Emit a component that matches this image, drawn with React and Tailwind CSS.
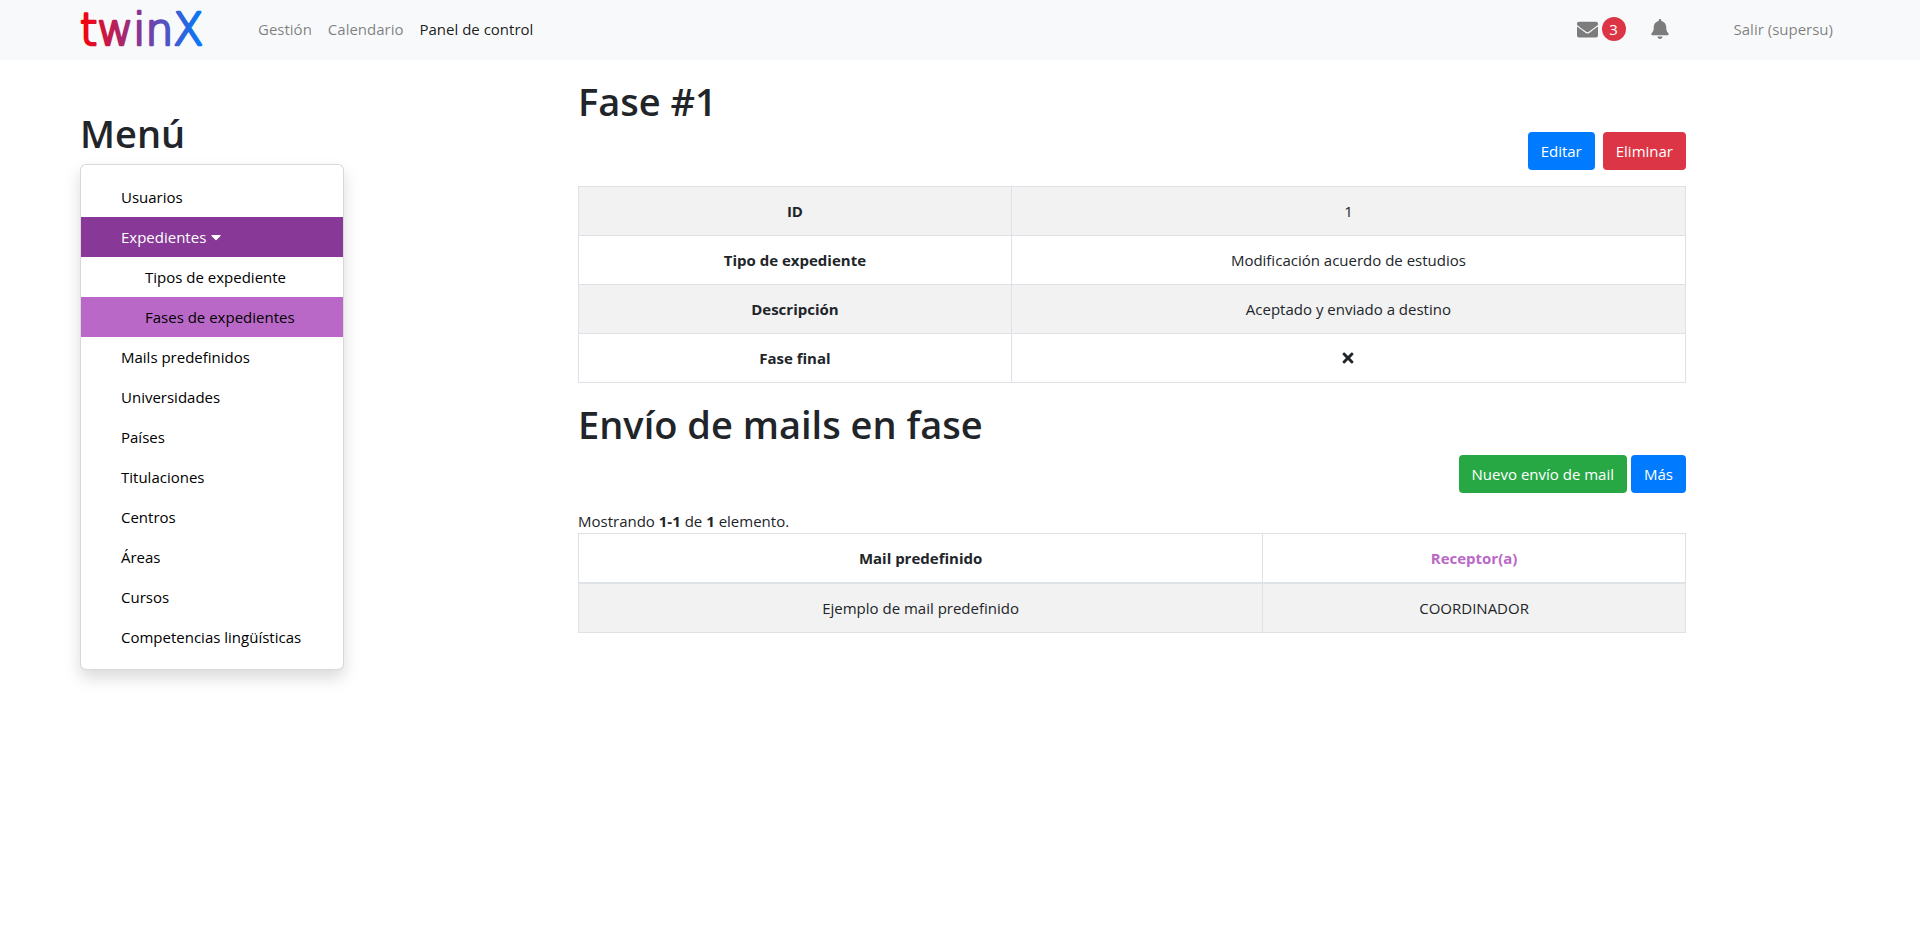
import React from "react";
import { FaEnvelope, FaBell, FaTimes, FaCaretDown } from "react-icons/fa";

const menu = [
  { label: "Usuarios" },
  { label: "Expedientes", open: true },
  { label: "Tipos de expediente", sub: true },
  { label: "Fases de expedientes", sub: true, active: true },
  { label: "Mails predefinidos" },
  { label: "Universidades" },
  { label: "Países" },
  { label: "Titulaciones" },
  { label: "Centros" },
  { label: "Áreas" },
  { label: "Cursos" },
  { label: "Competencias lingüísticas" },
];

const details = [
  ["ID", "1"],
  ["Tipo de expediente", "Modificación acuerdo de estudios"],
  ["Descripción", "Aceptado y enviado a destino"],
  ["Fase final", <FaTimes key="no" role="img" aria-label="No" className="mx-auto size-4" />],
];

function Logo() {
  return (
    <a href="#inicio" aria-label="twinX" className="block shrink-0">
      <svg width="128" height="58" viewBox="0 0 128 58" className="overflow-visible">
        <defs>
          <linearGradient id="brand" gradientUnits="userSpaceOnUse" x1="0" y1="0" x2="124" y2="0">
            <stop offset="0" stopColor="#fb0007" />
            <stop offset="0.5" stopColor="#83399c" />
            <stop offset="1" stopColor="#007bff" />
          </linearGradient>
        </defs>
        <text
          x="0"
          y="45"
          fill="url(#brand)"
          stroke="url(#brand)"
          strokeWidth="2.6"
          strokeLinejoin="round"
          className="font-['DejaVu_Sans',sans-serif] text-[44px] font-extralight"
        >
          twinX
        </text>
      </svg>
    </a>
  );
}

function Heading({ children }) {
  return <h1 className="text-[38px] leading-12 font-semibold">{children}</h1>;
}

function Button({ color, children }) {
  return (
    <button type="button" className={`h-[38px] rounded-sm px-[13px] text-white ${color}`}>
      {children}
    </button>
  );
}

function menuStyle(item) {
  if (item.open) return "bg-[#883997] pl-10 text-white";
  if (item.active) return "bg-[#ba68c8] pl-16 text-black";
  return item.sub ? "pl-16 text-black" : "pl-10 text-black";
}

const cell = "border border-[#dee2e6] p-3";

export default function App() {
  return (
    <div className="min-h-screen bg-white font-['Open_Sans','Noto_Sans',sans-serif] text-[15px] leading-6 text-[#212529]">
      <header className="flex h-15 items-center bg-[#f8f9fa] px-20 pb-0.5 text-black/50">
        <Logo />
        <nav className="ml-[50px] flex gap-4">
          <a href="#gestion">Gestión</a>
          <a href="#calendario">Calendario</a>
          <a href="#panel" aria-current="page" className="text-black/90">Panel de control</a>
        </nav>
        <div className="ml-auto flex items-center pr-[7px]">
          <a href="#mensajes" aria-label="Mensajes: 3" className="flex items-center gap-1">
            <FaEnvelope className="size-[21px]" />
            <span className="flex size-6 items-center justify-center rounded-full bg-[#dc3545] text-white">3</span>
          </a>
          <a href="#avisos" aria-label="Avisos" className="ml-6">
            <FaBell className="size-5" />
          </a>
          <a href="#salir" className="ml-16">Salir (supersu)</a>
        </div>
      </header>

      <div className="grid grid-cols-[264fr_234fr_1108fr_154fr] items-start px-20">
        <aside className="pt-[49px]">
          <Heading>Menú</Heading>
          <nav className="mt-[7px] rounded-md border border-black/15 bg-white py-3 shadow-[0_8px_16px_rgba(0,0,0,0.15)]">
            {menu.map((item) => (
              <a
                key={item.label}
                href={`#${item.label}`}
                className={`flex h-10 items-center whitespace-nowrap ${menuStyle(item)}`}
              >
                {item.label}
                {item.open && <FaCaretDown className="ml-0.5 size-4" />}
              </a>
            ))}
          </nav>
        </aside>

        <main className="col-start-3 pt-[17px]">
          <Heading>Fase #1</Heading>
          <div className="mt-[7px] flex justify-end gap-2">
            <Button color="bg-[#007bff]">Editar</Button>
            <Button color="bg-[#dc3545]">Eliminar</Button>
          </div>
          <table className="mt-4 w-full table-fixed border-collapse text-center">
            <colgroup>
              <col className="w-[39.1%]" />
              <col />
            </colgroup>
            <tbody>
              {details.map(([name, value]) => (
                <tr key={name} className="odd:bg-[#f2f2f2]">
                  <th scope="row" className={`${cell} font-bold`}>{name}</th>
                  <td className={cell}>{value}</td>
                </tr>
              ))}
            </tbody>
          </table>

          <div className="mt-[17px]">
            <Heading>Envío de mails en fase</Heading>
          </div>
          <div className="mt-[7px] flex justify-end gap-1">
            <Button color="bg-[#28a745]">Nuevo envío de mail</Button>
            <Button color="bg-[#007bff]">Más</Button>
          </div>
          <p className="mt-4">
            Mostrando <b>1-1</b> de <b>1</b> elemento.
          </p>
          <table className="w-full table-fixed border-collapse text-center">
            <colgroup>
              <col />
              <col className="w-[38.2%]" />
            </colgroup>
            <thead>
              <tr>
                <th scope="col" className="border border-b-2 border-[#dee2e6] p-3 font-bold">Mail predefinido</th>
                <th scope="col" className="border border-b-2 border-[#dee2e6] p-3 font-bold">
                  <a href="#receptor" className="text-[#ba68c8]">Receptor(a)</a>
                </th>
              </tr>
            </thead>
            <tbody>
              <tr className="bg-[#f2f2f2]">
                <td className={cell}>Ejemplo de mail predefinido</td>
                <td className={cell}>COORDINADOR</td>
              </tr>
            </tbody>
          </table>
        </main>
      </div>
    </div>
  );
}
